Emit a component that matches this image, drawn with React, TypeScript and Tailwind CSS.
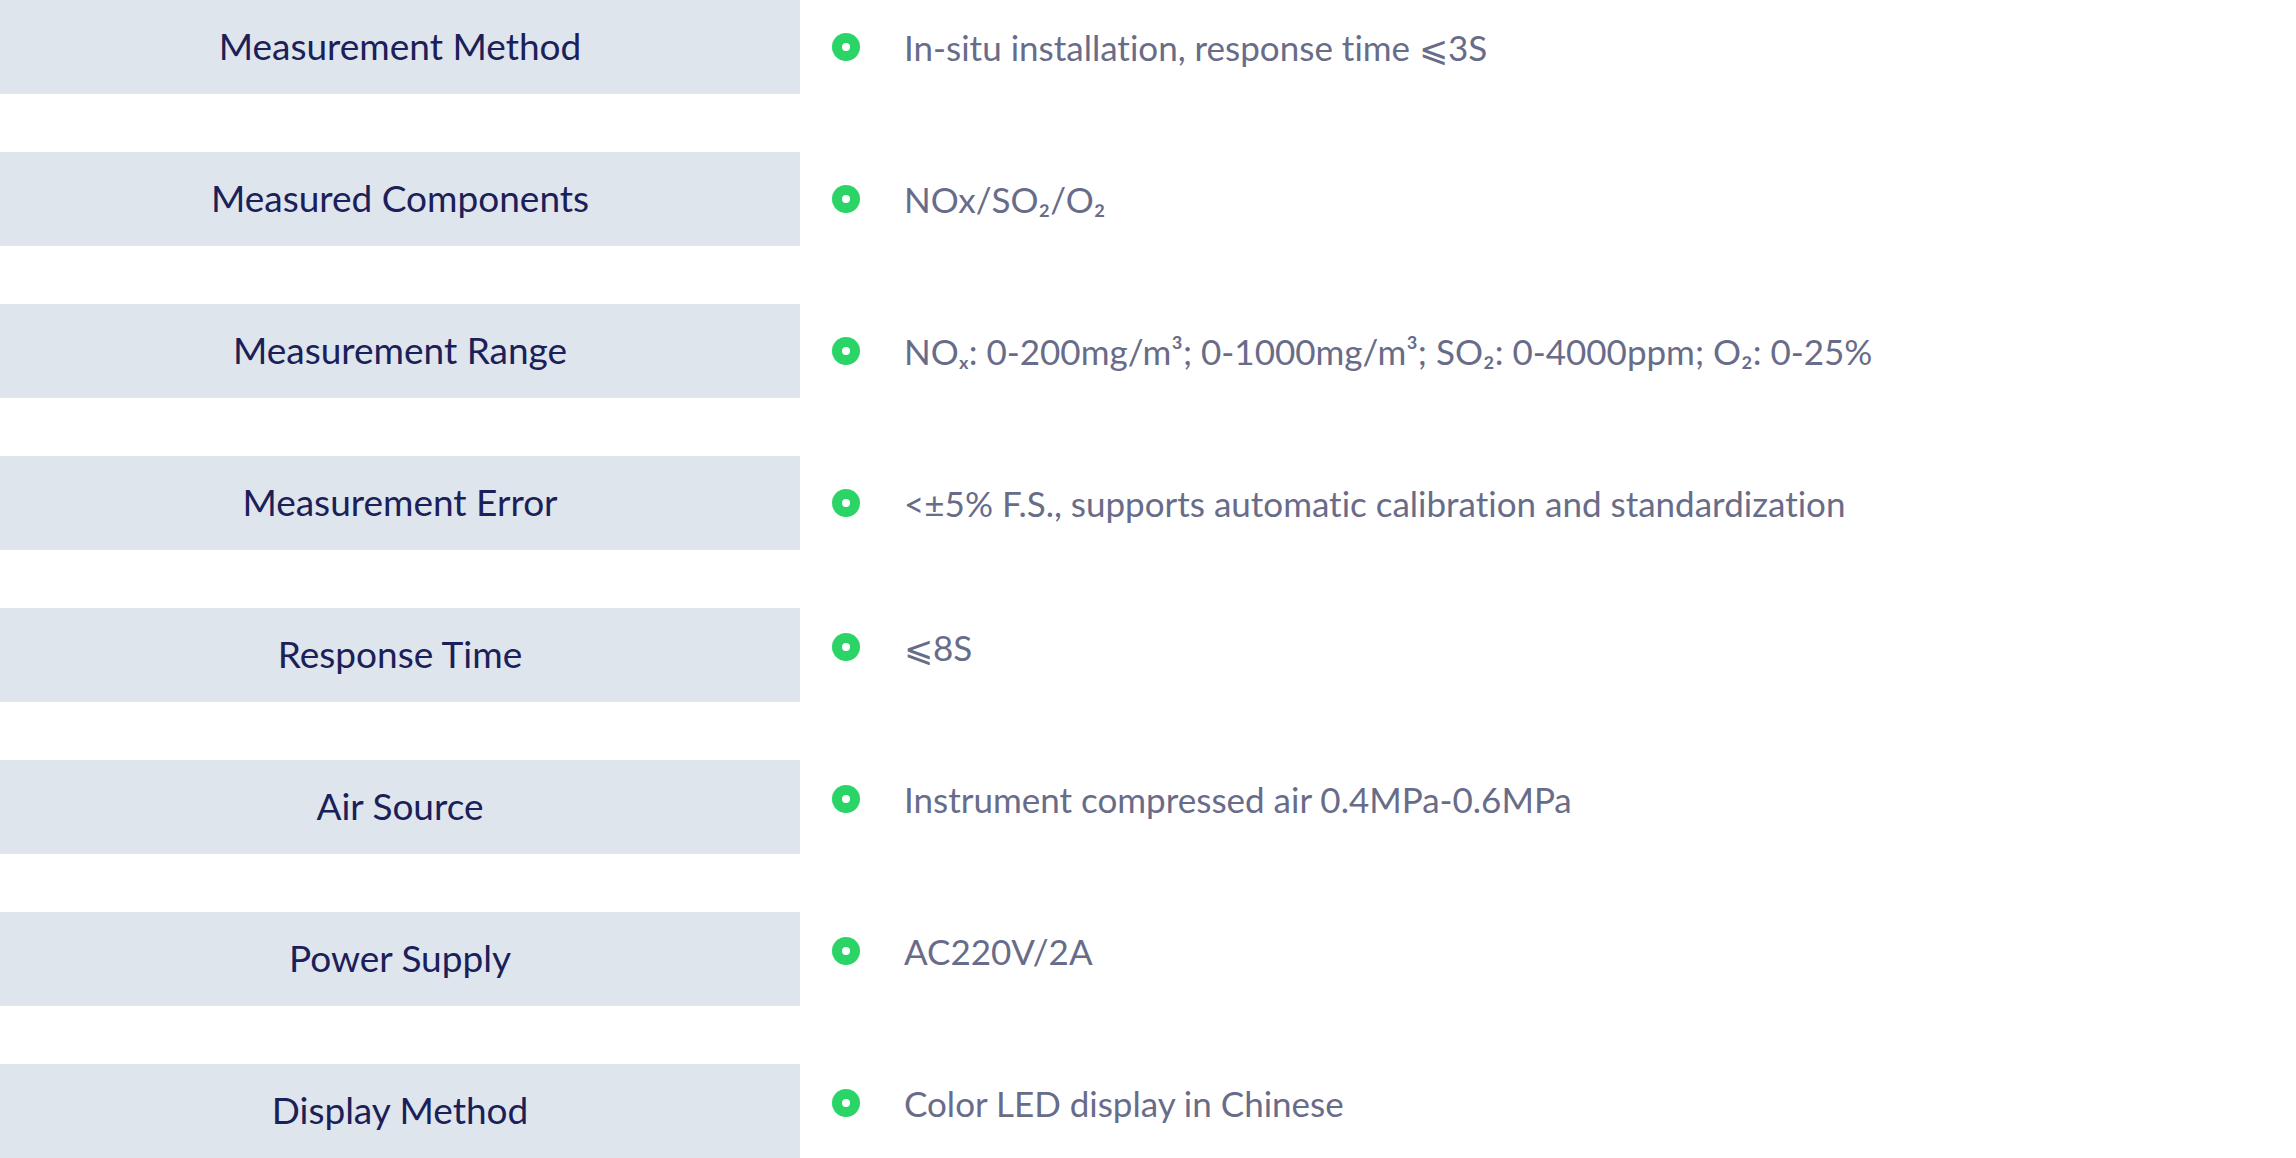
import React from "react";

const specs = [
  { label: "Measurement Method", value: "In-situ installation, response time ⩽3S", lift: false },
  { label: "Measured Components", value: "NOx/SO₂/O₂", lift: false },
  { label: "Measurement Range", value: "NOₓ: 0-200mg/m³; 0-1000mg/m³; SO₂: 0-4000ppm; O₂: 0-25%", lift: false },
  { label: "Measurement Error", value: "<±5% F.S., supports automatic calibration and standardization", lift: false },
  { label: "Response Time", value: "⩽8S", lift: true },
  { label: "Air Source", value: "Instrument compressed air 0.4MPa-0.6MPa", lift: true },
  { label: "Power Supply", value: "AC220V/2A", lift: true },
  { label: "Display Method", value: "Color LED display in Chinese", lift: true },
];

const Dot = () => (
  <span className="flex h-[28px] w-[28px] shrink-0 items-center justify-center rounded-full bg-[#2bd466]">
    <span className="h-[8px] w-[8px] rounded-full bg-white" />
  </span>
);

const App = () => {
  return (
    <div
      className="flex w-[2296px] flex-col gap-[58px] bg-white [font-variant-ligatures:none]"
      style={{ fontFamily: '"Lato", "Noto Sans", "Noto Sans CJK SC", sans-serif' }}
    >
      {specs.map((item) => (
        <div key={item.label} className="flex h-[94px]">
          <div className="flex w-[800px] shrink-0 items-center justify-center bg-[#dfe5ed] pb-[2px] text-[37px] text-[#1b2058]">
            {item.label}
          </div>
          <div
            className={`flex items-center pl-[32px] ${item.lift ? "pb-[16px]" : ""}`}
          >
            <Dot />
            <span className="ml-[44px] text-[35px] text-[#686c89]">{item.value}</span>
          </div>
        </div>
      ))}
    </div>
  );
};

export default App;
